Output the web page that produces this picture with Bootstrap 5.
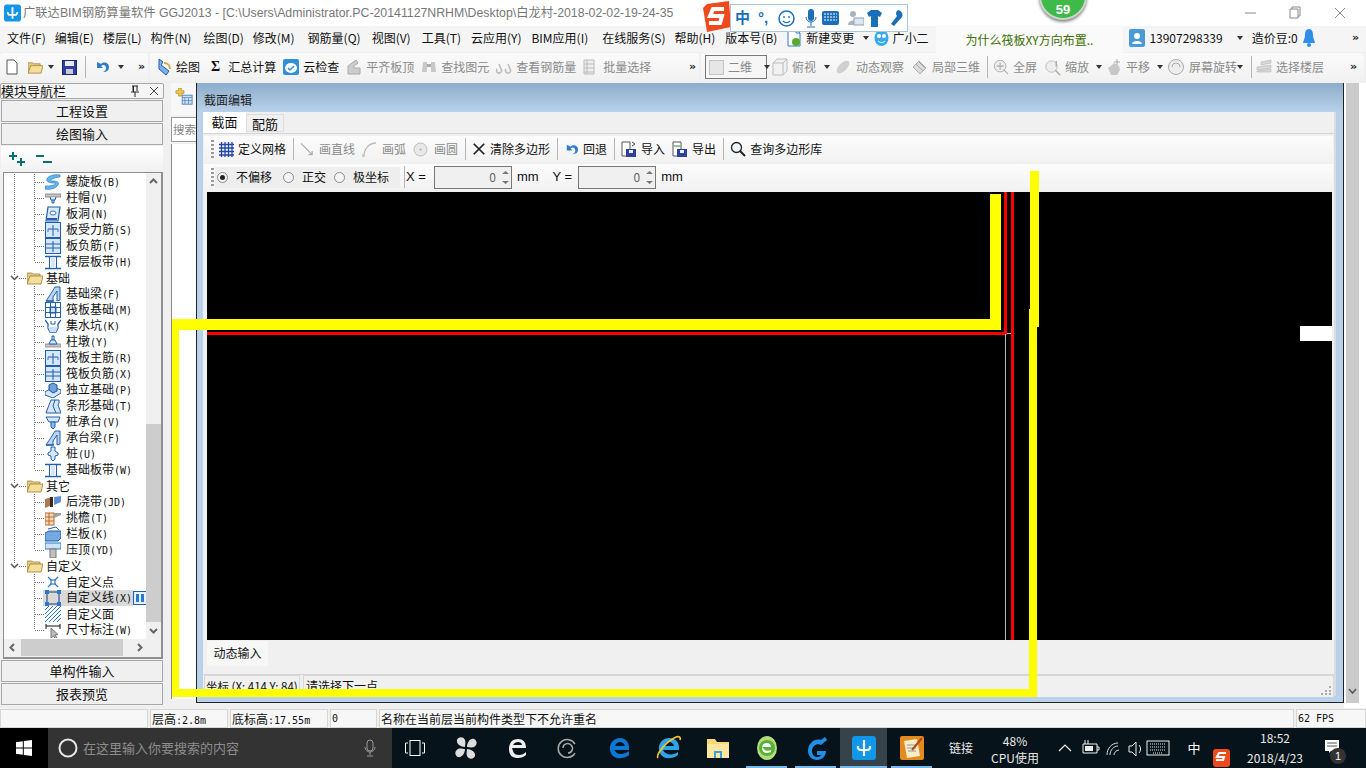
<!DOCTYPE html>
<html lang="zh"><head><meta charset="utf-8"><title>GGJ2013</title>
<link href="https://cdn.jsdelivr.net/npm/bootstrap@5.3.0/dist/css/bootstrap.min.css" rel="stylesheet">
<style>
html,body{width:1366px;height:768px;overflow:hidden;margin:0}
body{position:relative;background:#f0f0f0;color:#111;font:12px/16px "Liberation Sans","Noto Sans CJK SC",sans-serif}
svg{display:block;flex:none}
.ts{font-family:"Noto Sans CJK SC","Liberation Sans",sans-serif}
.m1{margin-left:1px}.m2{margin-left:2px}.m3{margin-left:3px}.m5{margin-left:5px}.mn3{margin-left:-3px}.mn5{margin-left:-5px}.mn7{margin-left:-7px}
.titlebar{height:26px;background:#fff;color:#777;font-size:12.3px;white-space:nowrap;overflow:hidden}
.titlebar .tt{margin-left:2px}
.wctl{position:absolute;top:0;height:26px}
.menubar{height:26px;background:#f5f5f5;white-space:nowrap;padding-left:7px;padding-bottom:2px;gap:9px}
.tipbox{width:187px;height:31px;background:#fafafa;color:#3c6e00;border-radius:3px;margin-left:-1px;padding-left:29px;line-height:29px;align-self:flex-start;margin-top:-1px}
.chev{font-size:11px;font-weight:700;letter-spacing:-1px;color:#222;font-family:"DejaVu Sans",sans-serif;line-height:10px}
.caret-d{width:0;height:0;border:3px solid transparent;border-top:4px solid #333;border-bottom:0;flex:none}
.toolbar{height:31px;background:#f0f0f0;white-space:nowrap;padding-top:1px}
.tgroup{height:28px;background:linear-gradient(#fbfbfb,#f1f1f1);border-radius:3px;margin-right:2px}
.tg1{width:148px;padding-left:5px;flex:none}
.tg2{width:549px;padding-left:6px;flex:none}
.tg3{flex:1;padding-left:4px;position:relative}
.titem{display:flex;align-items:center;gap:4px;margin-right:7px;flex:none}
.off{color:#8b8b8b}
.vsep{width:1px;height:22px;background:#b5b5b5;flex:none}
.combo2{width:62px;height:24px;border:1px solid #777;background:#f6f6f6;color:#888;display:flex;align-items:center;padding-left:3px;gap:4px;flex:none;margin-right:5px}
.main{height:625px}
.leftp{width:165px;flex:none}
.lhead{height:16px;border:1px solid #a8a8a8;border-radius:2px;margin:0 1px 0 0;font-size:13px;line-height:14px;background:#f5f5f5}
.lbtn{height:22px;border:1px solid #a8a8a8;background:#f0f0f0;margin:1px 2px 0 1px;text-align:center;line-height:19px;font-size:13px}
.lbtn.frst{margin-top:1px}
.ltool{height:26px;margin:1px 2px 0 1px;background:linear-gradient(#fff,#f1f1f1);padding-left:7px;gap:10px}
.treebox{margin:0 2px 0 3px;height:487px;border:1px solid #8e8e8e;background:#f0f0f0;border-width:1px 2px 2px 1px}
.treeinner{height:466px}
.trees{width:142px;background:#fff;padding-top:1px;overflow:hidden;flex:none;border-bottom-right-radius:2px}
.vscroll{width:15px;height:466px;background:#f0f0f0;flex:none}
.vthumb{height:198px;background:#cdcdcd;width:15px}
.varrow{height:17px;flex:none}
.hscroll{height:17px;background:#f0f0f0}
.hthumb{width:102px;height:17px;background:#cdcdcd}
.trow{height:16px;display:flex;align-items:center;white-space:nowrap;background-repeat:no-repeat;font-family:"Noto Sans CJK SC",sans-serif;--dv:repeating-linear-gradient(to bottom,#777 0 1px,transparent 1px 2px);--dh:repeating-linear-gradient(to right,#777 0 1px,transparent 1px 2px)}
.trow i{font:10px/16px "DejaVu Sans Mono",monospace}
.lf{padding-left:41px;gap:5px;background-image:var(--dv),var(--dv),var(--dh);background-size:1px 100%,1px 100%,10px 1px;background-position:10px 0,30px 0,31px 8px}
.lf.end{background-size:1px 100%,1px 8px,10px 1px}
.lf.tail{background-image:var(--dv),var(--dh);background-size:1px 100%,10px 1px;background-position:30px 0,31px 8px}
.lf.tail.end{background-size:1px 8px,10px 1px}
.fd{padding-left:23px;gap:3px;background-image:var(--dv),var(--dh);background-size:1px 100%,12px 1px;background-position:10px 0,13px 8px;position:relative}
.fd.last{background-size:1px 8px,12px 1px}
.chv{position:absolute;left:6px;top:5px;background:#fff}
.seln b{font-weight:400;background:#d9d9d9;display:flex;gap:5px;align-items:center;height:16px;margin-left:-2px;padding-left:2px;padding-right:1px}
.midp{width:31px;flex:none;position:relative}
.midtab{height:32px;margin-left:6px;background:#f7f7f7;padding:5px 0 0 4px}
.searchb{height:25px;width:25px;margin:2px 0 0 6px;background:#fff;border:1px solid #9a9a9a;border-right:0;color:#888;font-size:11.5px;line-height:22px;padding-left:1px;overflow:hidden;white-space:nowrap}
.midlist{height:555px;width:25px;margin:2px 0 0 6px;background:#fff;border-left:1px solid #888}
.winp{flex:none;width:1148px;height:620px;border-left:1px solid #222;border-right:1px solid #222;border-bottom:1px solid #222;background:#b9d1ea}
.wtitle{height:29px;background:linear-gradient(#8caccb,#b9d1ea);padding-left:7px;line-height:34px;font-size:12px;color:#222}
.wbody{margin:0 7px 0 6px;background:#f0f0f0;height:584px;border-right:2px solid #dcdcdc}
.wtabs{height:21px;gap:0;background:#f0f0f0;border-bottom:0}
.wtabs .nav-link{border-radius:0;padding:0;color:#111;font-size:13px;height:21px;line-height:20px;text-align:center;background:#fff;border:0;width:43px}
.wtabs .nav-link.idle{width:38px;height:18px;margin-top:2px;background:#f0f0f0;border:1px solid #ddd;line-height:17px}
.wpanel{background:#f0f0f0;border-top:1px solid #d5d5d5;padding-top:2px}
.wbar{height:26px;background:linear-gradient(#fcfcfc,#f2f2f2);padding-left:7px;white-space:nowrap;margin:0 1px 2px 1px}
.grip{width:3px;height:18px;background:repeating-linear-gradient(to bottom,#999 0 2px,transparent 2px 4px);margin-right:5px;flex:none}
.wi{display:flex;align-items:center;gap:4px;margin-right:7px;flex:none}
.wi.g6{gap:6px}
.vs7{margin-right:6px}
.wbar2{height:26px;background:linear-gradient(#fcfcfc,#f2f2f2);padding-left:7px;white-space:nowrap;margin:0 1px 2px 1px}
.wbar2 .grip{margin-right:1px}
.radgrp{background:#eeeeee;height:21px;width:185px;padding-left:2px;flex:none;gap:8px}
.rad{width:11px;height:11px;border-radius:50%;border:1px solid #8a8a8a;background:#f5f5f5;flex:none;position:relative}
.rad.on::after{content:"";position:absolute;left:2px;top:2px;width:5px;height:5px;border-radius:50%;background:#222}
.radgap{width:3px;flex:none;margin-left:-8px}
.latin{font:13px/16px "Liberation Sans",sans-serif;flex:none}
.xl{margin-right:8px;margin-left:1px}
.mml{margin-left:5px}
.yl2{margin-left:14px;margin-right:6px}
.spin{width:78px;height:23px;border:1px solid #777;background:#f0f0f0;color:#666;display:flex;align-items:center;justify-content:flex-end;flex:none;padding-right:2px;gap:6px;font-size:12px}
.canvasbox{height:448px;background:#000;position:relative;overflow:hidden;width:1125px;margin-left:4px}
.cl{position:absolute}
.dynarea{height:30px;background:#f0f0f0;padding-left:4px}
.dyntab{width:61px;height:25px;background:#f7f7f7;line-height:24px;text-align:center;margin-top:1px}
.wstatus{height:23px;margin-top:3px;gap:3px;background:#f0f0f0;white-space:nowrap;overflow:hidden;border-top:1px solid #d5d5d5;position:relative}
.coordb{width:96px;border:1px solid #d8d8d8;border-bottom:0;height:22px;line-height:20px;flex:none;padding-left:1px;overflow:hidden;font-size:11.5px;margin-left:1px}
.msgb{flex:1;border:1px solid #d8d8d8;border-bottom:0;height:22px;line-height:20px;padding-left:2px}
.rgrip{position:absolute;right:3px;bottom:2px}
.rightsb{flex:1;background:#fff;position:relative}
.rtrack{width:13px;height:620px;background:#cbcbcb;margin-left:2px;padding-top:604px}
.status{height:20px;background:#f0f0f0;gap:2px;padding-top:1px;font-family:"DejaVu Sans Mono","Noto Sans CJK SC",monospace;white-space:nowrap}
.scell{height:19px;background:#f7f7f7;border:1px solid #d6d6d6;line-height:18px;padding-left:1px;flex:none;font-size:10px}
.scell span{font:12px "Noto Sans CJK SC",sans-serif}
.sc0{width:148px}.sc1{width:78px}.sc2{width:98px}.sc3{width:47px}.sc4{width:915px}.sc5{flex:1}
.taskbar{height:40px;background:#07131a;color:#e8e8e8;position:relative}
.startb{width:48px;height:40px;background:#000}
.searchbar{width:344px;height:40px;background:#333;color:#8d8d8d;font-size:13px;padding-left:10px;gap:5px;flex:none;position:relative}
.tbi{width:49px;height:40px;flex:none}
.tbi.act{background:#37434a;width:47px}
.tbi.act.tbu::after{left:0;right:0}
.tvw{margin-left:-2px;margin-right:2px}
.tbu{position:relative}
.tbu::after{content:"";position:absolute;left:4px;right:4px;bottom:0;height:2px;background:#76b9ed}
.tray{position:absolute;top:0;height:40px;text-align:center}
.sogou{position:absolute;left:730px;top:4px;width:178px;height:28px;background:#fff;border:1px solid #a9c6de;gap:8px;padding-left:4px;color:#1a6fb8;font-size:15px;font-weight:700}
.slogo{position:absolute;left:703px;top:1px}
.ball{position:absolute;left:1039px;top:-28px;width:48px;height:48px;border-radius:50%;background:#3fb94a;border:2px solid #c9d6cb;box-shadow:0 2px 3px #888;color:#fff;font-weight:700;font-size:13px;text-align:center;padding-top:28px;line-height:16px}
.yl{position:absolute;background:#ff0}
.y1{left:172px;top:319px;width:829px;height:11px}
.y2{left:990px;top:194px;width:11px;height:136px}
.y3{left:1030px;top:171px;width:9px;height:156px}
.y4{left:1029px;top:309px;width:8px;height:388px}
.y5{left:172px;top:689px;width:865px;height:8px}
.y6{left:172px;top:319px;width:7px;height:378px}
</style></head><body>
<svg width="0" height="0" style="position:absolute"><defs>
<symbol id="s" viewBox="0 0 16 16"><path d="M15 1C9 0 3 2 2 5c-1 3 3 4 7 4 2 0 2 1 0 2-3 1-6 1-9 1v3c6 1 11-1 13-4 2-3-2-4-6-4-2 0-2-1 0-2 2-1 5-2 8-2z" fill="#62b8ee" stroke="#2678c4" stroke-width=".7"/></symbol>
<symbol id="capi" viewBox="0 0 16 16"><rect x="0" y="4" width="16" height="3" fill="#c8c8c8" stroke="#777" stroke-width=".8"/><path d="M5 7l1 3h4l1-3M7 10v3h2v-3" fill="#cfe3f7" stroke="#1f5fae"/></symbol>
<symbol id="hole" viewBox="0 0 16 16"><path d="M3 1h12l-2 14H1z" fill="#dbe9f9" stroke="#1f5fae" stroke-width="1.2"/><ellipse cx="8" cy="7" rx="3" ry="2" fill="#fff" stroke="#2b78c8"/><path d="M2 13h10" stroke="#1f5fae" stroke-width="2"/></symbol>
<symbol id="grid1" viewBox="0 0 16 16"><rect x=".5" y=".5" width="15" height="15" fill="#d7e6f8" stroke="#1f5fae"/><path d="M8 3v11M3 7h10" stroke="#1f5fae" stroke-width="1"/><path d="M3 7v3M13 7v3" stroke="#2b78c8"/></symbol>
<symbol id="grid2" viewBox="0 0 16 16"><rect x=".5" y=".5" width="15" height="15" fill="#d7e6f8" stroke="#1f5fae"/><path d="M8 3v11M1 6h14M1 10h14" stroke="#1f5fae" stroke-width="1"/></symbol>
<symbol id="grid3" viewBox="0 0 16 16"><rect x=".5" y=".5" width="15" height="15" fill="#fff" stroke="#1f5fae"/><rect x="5" y="5" width="6" height="6" fill="#cfe1f6" stroke="#1f5fae"/><path d="M1 5.500h14M1 10.500h14M5.500 1v14M10.500 1v14" stroke="#1f5fae"/></symbol>
<symbol id="band" viewBox="0 0 16 16"><path d="M0 2.500h16M0 14.500h16" stroke="#1f5fae" stroke-width="1.600"/><path d="M4.500 3v11M11.500 3v11" stroke="#1f5fae"/><path d="M6 3h4v11H6z" fill="#d7e6f8"/></symbol>
<symbol id="fold" viewBox="0 0 16 16"><path d="M0 3h5l1 1h7v3H3L1 13H0z" fill="#e4c983" stroke="#9a7a35" stroke-width=".7"/><path d="M3 6h13l-2 8H0z" fill="#f5dd9a" stroke="#a07e33" stroke-width=".8"/></symbol>
<symbol id="beam" viewBox="0 0 16 16"><path d="M1 15l6-9 3-5h5v13l-3 1V5L8 11v4z" fill="#bcd6f4" stroke="#1f5fae"/><path d="M1 15h8" stroke="#1f5fae" stroke-width="1.400"/></symbol>
<symbol id="pit" viewBox="0 0 16 16"><path d="M0 2l3 4v4l2 4h6l2-4V6l3-4" fill="none" stroke="#1f5fae" stroke-width="1.300"/><path d="M3 9h10l-2 5H5z" fill="#c9dff6"/><path d="M6 3v3h4V3" fill="none" stroke="#1f5fae"/></symbol>
<symbol id="pier" viewBox="0 0 16 16"><rect y="10" width="16" height="3" fill="#c8c8c8" stroke="#777" stroke-width=".7"/><path d="M4 10l2-4h4l2 4zM7 6V2h2v4" fill="#d7e6f8" stroke="#1f5fae"/></symbol>
<symbol id="ind" viewBox="0 0 16 16"><path d="M0 10l8-5 8 3v3l-8 5-8-3z" fill="#d7e6f8" stroke="#1f5fae"/><path d="M4 8V3l4-2 4 2v6L8 11z" fill="#6ea3dd" stroke="#1f4f96"/></symbol>
<symbol id="strip" viewBox="0 0 16 16"><path d="M1 15l3-8 2-5h8v3l-1 2 3 8z" fill="#d7e6f8" stroke="#1f5fae"/><path d="M10 2l-2 6 3 7" fill="none" stroke="#1f5fae"/></symbol>
<symbol id="cap" viewBox="0 0 16 16"><path d="M1 3h14l-2 5H4z" fill="#d7e6f8" stroke="#1f5fae"/><path d="M6 8h4v5l-2 2-2-2z" fill="#8dbbec" stroke="#1f5fae"/></symbol>
<symbol id="pile" viewBox="0 0 16 16"><path d="M6 1h4v4l3 2v2l-3 1v3l-2 2-2-2v-3L3 9V7l3-2z" fill="#d7e6f8" stroke="#1f5fae"/></symbol>
<symbol id="pour" viewBox="0 0 16 16"><path d="M0 5l7-2v8l-7 3z" fill="#a97a54"/><path d="M9 3l7-1v6l-7 3z" fill="#5d8fd0"/><path d="M5 3h3v10H5z" fill="#3b2a20"/></symbol>
<symbol id="eave" viewBox="0 0 16 16"><rect x="0" y="3" width="9" height="12" fill="#f5d7bf" stroke="#bb6a2a"/><path d="M0 7h9M0 11h9M4 3v12" stroke="#bb6a2a"/><path d="M9 3h7v2l-7 3z" fill="#a0a0a0"/></symbol>
<symbol id="rail" viewBox="0 0 16 16"><path d="M0 7l4-2h12v7l-3 3H0z" fill="#74a9e4" stroke="#1f5fae"/><path d="M3 3l8-2 3 3" fill="none" stroke="#1f5fae"/></symbol>
<symbol id="top" viewBox="0 0 16 16"><rect y="1" width="16" height="6" fill="#cfe3f7" stroke="#2b78c8"/><rect x="5" y="7" width="6" height="9" fill="#c0c0c0" stroke="#777"/></symbol>
<symbol id="pt" viewBox="0 0 16 16"><path d="M3 3l10 10M13 3L3 13" stroke="#2b78c8" stroke-width="1.200"/><rect x="6" y="6" width="4" height="4" fill="#fff" stroke="#1f5fae"/></symbol>
<symbol id="ln" viewBox="0 0 16 16"><rect x="2" y="2" width="12" height="12" fill="none" stroke="#1a3c78"/><path d="M0 0h4v4H0zM12 0h4v4h-4zM0 12h4v4H0zM12 12h4v4h-4z" fill="#2b78c8"/></symbol>
<symbol id="hatch" viewBox="0 0 16 16"><path d="M0 4l4-4M0 8l8-8M0 12L12 0M0 16L16 0M4 16L16 4M8 16l8-8M12 16l4-4" stroke="#2b78c8"/></symbol>
<symbol id="dim" viewBox="0 0 16 16"><path d="M1 2v5M15 2v5M1 4h14" stroke="#111"/><path d="M6 6l0 10 2.500-2 2 3 1.500-1-2-3 3-.5z" fill="#bbb" stroke="#777"/></symbol>
<symbol id="cross" viewBox="0 0 16 16"><path d="M2 2l12 12M14 2L2 14" stroke="#222" stroke-width="2"/></symbol>
</defs></svg>

<div class="titlebar d-flex align-items-center ps-1">
<svg width="17" height="18" viewBox="0 0 18 18"><rect width="18" height="18" rx="3" fill="#1296e8"/><path d="M9 3v12M4 8a2.500 2.500 0 0 0 2.500 3H11.500A2.500 2.500 0 0 0 14 8" stroke="#fff" stroke-width="2" fill="none"/></svg>
<span class="tt">广联达BIM钢筋算量软件 GGJ2013 - [C:\Users\Administrator.PC-20141127NRHM\Desktop\白龙村-2018-02-02-19-24-35</span>
</div>
<svg class="wctl" style="left:1235px" width="131" height="26" viewBox="0 0 131 26"><path d="M10 13h11" stroke="#888"/><path d="M55 9h8v9h-8zM57 9V7h8v9h-2" fill="none" stroke="#888"/><path d="M100 8l10 10M110 8l-10 10" stroke="#888"/></svg>

<div class="menubar d-flex align-items-center ts">
<span>文件(F)</span><span>编辑(E)</span><span>楼层(L)</span><span>构件(N)</span><span class="m3">绘图(D)</span><span>修改(M)</span><span class="ms-1">钢筋量(Q)</span><span class="m2">视图(V)</span><span class="m2">工具(T)</span><span class="m1">云应用(Y)</span><span class="m1">BIM应用(I)</span><span class="m5">在线服务(S)</span><span>帮助(H)</span><span class="m1">版本号(B)</span>
<svg width="16" height="20" viewBox="0 0 16 20"><path d="M2 1h8l4 4v13H2z" fill="#fff" stroke="#2f7dc9"/><path d="M10 1v4h4" fill="none" stroke="#2f7dc9"/><circle cx="10" cy="14" r="4" fill="#58a92c"/></svg>
<span class="mn5">新建变更</span><span class="caret-d"></span>
<svg class="mn5" width="17" height="18" viewBox="0 0 17 18"><ellipse cx="8.500" cy="9" rx="7" ry="8" fill="#38a9ea"/><circle cx="6" cy="7" r="2" fill="#fff"/><circle cx="11" cy="7" r="2" fill="#fff"/><path d="M5 12c2 2 5 2 7 0" stroke="#fff" fill="none"/></svg>
<span class="mn7">广小二</span>
<div class="tipbox ts">为什么筏板XY方向布置..</div>
<svg width="16" height="18" viewBox="0 0 16 18" class="mn3"><rect width="16" height="18" rx="2" fill="#4a9ad8"/><circle cx="8" cy="7" r="3" fill="#fff"/><path d="M3 15c0-4 10-4 10 0z" fill="#fff"/></svg>
<span class="mn5">13907298339</span><span class="caret-d m5"></span><span>造价豆:0</span>
<svg width="14" height="20" viewBox="0 0 14 20" class="mn5"><path d="M7 1c3 0 4 3 4 6 0 4 2 6 2 8H1c0-2 2-4 2-8 0-3 1-6 4-6z" fill="#2f8fe8"/><circle cx="7" cy="17" r="2" fill="#2f8fe8"/></svg>
<span class="chev ms-auto me-2">»</span>
</div>

<div class="toolbar d-flex align-items-start ts">
<div class="tgroup tg1 d-flex align-items-center">
<svg width="14" height="16" viewBox="0 0 14 16" class="me-2"><path d="M2 1h7l3 3v11H2z" fill="#fff" stroke="#555"/></svg>
<svg width="17" height="15" viewBox="0 0 16 16"><use href="#fold"/></svg><span class="caret-d ms-1"></span>
<svg width="15" height="15" viewBox="0 0 15 15" class="ms-2"><rect x=".5" y=".5" width="14" height="14" fill="#2e3f9e" stroke="#1a2570"/><rect x="3" y="1" width="9" height="5" fill="#e8e8f4"/><rect x="4" y="9" width="7" height="5" fill="#c8ccd8"/></svg>
<span class="vsep ms-2 me-2"></span>
<svg width="16" height="16" viewBox="0 0 16 16"><path d="M3 3v6h6L7 7c2-2 5-1 5 2 0 2-1 3-3 4 4 0 6-2 6-5 0-4-5-6-8-3z" fill="#2f7dc9"/></svg><span class="caret-d ms-2"></span>
<span class="chev ms-auto me-1">»</span>
</div>
<div class="tgroup tg2 d-flex align-items-center">
<div class="titem"><svg width="16" height="18" viewBox="0 0 16 18"><path d="M3 1l4 3-2 3 8 6-3 4-7-6z" fill="#7fb0e8" stroke="#1f5fae"/><path d="M8 5c4 0 6 3 6 6" stroke="#d2a93a" stroke-width="2" fill="none"/></svg><span>绘图</span></div>
<div class="titem ms-1"><b class="me-1" style="font-family:'Liberation Serif',serif;font-size:14px">Σ</b><span>汇总计算</span></div>
<div class="titem"><svg width="16" height="16" viewBox="0 0 16 16"><rect width="16" height="16" rx="2" fill="#2f8fd8"/><ellipse cx="8" cy="9" rx="6" ry="5" fill="#fff"/><path d="M5 9l2 2 4-4" stroke="#2f8fd8" fill="none" stroke-width="1.500"/></svg><span>云检查</span></div>
<div class="titem off"><svg width="16" height="16" viewBox="0 0 16 16"><path d="M2 15V7l8-6 2 3-4 3v2h6v6z" fill="#ccc" stroke="#aaa"/></svg><span>平齐板顶</span></div>
<div class="titem off"><svg width="16" height="16" viewBox="0 0 16 16"><path d="M2 3h4v10H1zM10 3h4l1 10h-5z" fill="#c8c8c8"/><rect x="6" y="5" width="4" height="3" fill="#aaa"/></svg><span>查找图元</span></div>
<div class="titem off"><svg width="16" height="16" viewBox="0 0 16 16"><path d="M1 10a2.500 2.500 0 1 0 4 0L3 5M10 10a2.500 2.500 0 1 0 4 0l-2-5" fill="none" stroke="#bbb" stroke-width="1.500"/></svg><span>查看钢筋量</span></div>
<div class="titem off"><svg width="16" height="16" viewBox="0 0 16 16"><path d="M1 1h10v14H1z" fill="#eee" stroke="#bbb"/><path d="M1 5h10M1 9h10M1 13h10M4 1v14" stroke="#bbb"/></svg><span>批量选择</span></div>
<span class="chev ms-auto me-1">»</span>
</div>
<div class="tgroup tg3 d-flex align-items-center">
<div class="combo2"><svg width="15" height="15" viewBox="0 0 15 15"><rect x=".5" y=".5" width="14" height="14" fill="#e6e6e6" stroke="#c4c4c4"/></svg><span>二维</span><span class="caret-d ms-2"></span></div>
<svg width="16" height="18" viewBox="0 0 16 18"><path d="M1 5l4-4h10v12l-4 4H1zM1 5h10v12M11 5l4-4" fill="#f2f2f2" stroke="#bbb"/></svg>
<span class="off ms-1 me-2">俯视</span><span class="caret-d me-1"></span>
<div class="titem off"><svg width="18" height="18" viewBox="0 0 18 18"><ellipse cx="9" cy="9" rx="8" ry="4" transform="rotate(-45 9 9)" fill="#cfcfcf"/></svg><span>动态观察</span></div>
<div class="titem off"><svg width="17" height="17" viewBox="0 0 17 17"><path d="M2 8l6-6 7 7-6 6z" fill="#dcdcdc" stroke="#aaa"/><path d="M5 5l7 7M8 3l6 6" stroke="#aaa"/></svg><span>局部三维</span></div>
<span class="vsep"></span>
<div class="titem off m5"><svg width="16" height="16" viewBox="0 0 18 18"><circle cx="8" cy="8" r="6.500" fill="#eee" stroke="#aaa"/><path d="M8 4v8M4 8h8M12 12l5 5" stroke="#aaa" stroke-width="1.200"/></svg><span>全屏</span></div>
<div class="titem off"><svg width="17" height="17" viewBox="0 0 18 18"><circle cx="8" cy="8" r="6" fill="#eee" stroke="#bbb"/><path d="M12 12l5 5M13 2v6" stroke="#aaa" stroke-width="1.500"/></svg><span>缩放</span></div>
<span class="caret-d me-1"></span>
<div class="titem off"><svg width="16" height="18" viewBox="0 0 16 18"><path d="M2 10l4-3 2-2 5 3 1 4-3 5H5z" fill="#c8c8c8"/><path d="M11 1v6M8 4h6" stroke="#aaa"/></svg><span>平移</span></div>
<span class="caret-d me-1"></span>
<div class="titem off me-0"><svg width="18" height="18" viewBox="0 0 18 18"><circle cx="9" cy="9" r="7.500" fill="#eee" stroke="#aaa"/><path d="M5 9a4 4 0 0 1 8 0" stroke="#aaa" fill="none"/></svg><span>屏幕旋转</span></div>
<span class="caret-d"></span><span class="vsep ms-2 me-1"></span>
<div class="titem off"><svg width="16" height="16" viewBox="0 0 16 16"><path d="M5 3l10-2v3L5 6zM1 8l14-2v3L1 11zM1 12l14-2v3H1z" fill="#d8d8d8" stroke="#bbb" stroke-width=".7"/></svg><span>选择楼层</span></div>
<span class="chev ms-auto me-2">»</span>
</div>
</div>

<div class="main d-flex">
<div class="leftp ts">
<div class="lhead d-flex align-items-center"><span>模块导航栏</span>
<svg width="12" height="12" viewBox="0 0 12 12" class="ms-auto me-2"><path d="M3 1h6M4 1v5M8 1v5M2 7h8M6 7v5" stroke="#222"/><path d="M4 1h1v6H4z" fill="#222"/></svg>
<svg width="10" height="10" viewBox="0 0 10 10" class="me-1"><path d="M1 1l8 8M9 1l-8 8" stroke="#444"/></svg></div>
<div class="lbtn frst">工程设置</div>
<div class="lbtn">绘图输入</div>
<div class="ltool d-flex align-items-center">
<svg width="18" height="16" viewBox="0 0 18 16"><path d="M1 5h8M5 1v8M9 11h8M13 7v8" stroke="#08706e" stroke-width="2"/></svg>
<svg width="16" height="14" viewBox="0 0 16 14"><path d="M0 4h8M7 10h9" stroke="#08706e" stroke-width="2"/></svg>
</div>
<div class="treebox">
<div class="treeinner d-flex">
<div class="trees">
<div class="trow lf"><svg width="16" height="16"><use href="#s"/></svg><span>螺旋板<i>(B)</i></span></div>
<div class="trow lf"><svg width="16" height="16"><use href="#capi"/></svg><span>柱帽<i>(V)</i></span></div>
<div class="trow lf"><svg width="16" height="16"><use href="#hole"/></svg><span>板洞<i>(N)</i></span></div>
<div class="trow lf"><svg width="16" height="16"><use href="#grid1"/></svg><span>板受力筋<i>(S)</i></span></div>
<div class="trow lf"><svg width="16" height="16"><use href="#grid2"/></svg><span>板负筋<i>(F)</i></span></div>
<div class="trow lf end"><svg width="16" height="16"><use href="#band"/></svg><span>楼层板带<i>(H)</i></span></div>
<div class="trow fd"><svg class="chv" width="9" height="6" viewBox="0 0 9 6"><path d="M1 1l3.500 3.500L8 1" fill="none" stroke="#555" stroke-width="1.500"/></svg><svg width="16" height="16"><use href="#fold"/></svg><span>基础</span></div>
<div class="trow lf"><svg width="16" height="16"><use href="#beam"/></svg><span>基础梁<i>(F)</i></span></div>
<div class="trow lf"><svg width="16" height="16"><use href="#grid3"/></svg><span>筏板基础<i>(M)</i></span></div>
<div class="trow lf"><svg width="16" height="16"><use href="#pit"/></svg><span>集水坑<i>(K)</i></span></div>
<div class="trow lf"><svg width="16" height="16"><use href="#pier"/></svg><span>柱墩<i>(Y)</i></span></div>
<div class="trow lf"><svg width="16" height="16"><use href="#grid1"/></svg><span>筏板主筋<i>(R)</i></span></div>
<div class="trow lf"><svg width="16" height="16"><use href="#grid2"/></svg><span>筏板负筋<i>(X)</i></span></div>
<div class="trow lf"><svg width="16" height="16"><use href="#ind"/></svg><span>独立基础<i>(P)</i></span></div>
<div class="trow lf"><svg width="16" height="16"><use href="#strip"/></svg><span>条形基础<i>(T)</i></span></div>
<div class="trow lf"><svg width="16" height="16"><use href="#cap"/></svg><span>桩承台<i>(V)</i></span></div>
<div class="trow lf"><svg width="16" height="16"><use href="#beam"/></svg><span>承台梁<i>(F)</i></span></div>
<div class="trow lf"><svg width="16" height="16"><use href="#pile"/></svg><span>桩<i>(U)</i></span></div>
<div class="trow lf end"><svg width="16" height="16"><use href="#band"/></svg><span>基础板带<i>(W)</i></span></div>
<div class="trow fd"><svg class="chv" width="9" height="6" viewBox="0 0 9 6"><path d="M1 1l3.500 3.500L8 1" fill="none" stroke="#555" stroke-width="1.500"/></svg><svg width="16" height="16"><use href="#fold"/></svg><span>其它</span></div>
<div class="trow lf"><svg width="16" height="16"><use href="#pour"/></svg><span>后浇带<i>(JD)</i></span></div>
<div class="trow lf"><svg width="16" height="16"><use href="#eave"/></svg><span>挑檐<i>(T)</i></span></div>
<div class="trow lf"><svg width="16" height="16"><use href="#rail"/></svg><span>栏板<i>(K)</i></span></div>
<div class="trow lf end"><svg width="16" height="16"><use href="#top"/></svg><span>压顶<i>(YD)</i></span></div>
<div class="trow fd last"><svg class="chv" width="9" height="6" viewBox="0 0 9 6"><path d="M1 1l3.500 3.500L8 1" fill="none" stroke="#555" stroke-width="1.500"/></svg><svg width="16" height="16"><use href="#fold"/></svg><span>自定义</span></div>
<div class="trow lf tail"><svg width="16" height="16"><use href="#pt"/></svg><span>自定义点</span></div>
<div class="trow lf tail seln"><b><svg width="16" height="16"><use href="#ln"/></svg><span>自定义线<i>(X)</i></span></b><svg width="14" height="14" viewBox="0 0 14 14" class="mn5"><rect x=".5" y=".5" width="13" height="13" fill="#e4f0fb" stroke="#1f5fae"/><path d="M3 3h3v8H3zM8 3h3v8H8z" fill="#2b78c8"/></svg></div>
<div class="trow lf tail"><svg width="16" height="16"><use href="#hatch"/></svg><span>自定义面</span></div>
<div class="trow lf tail end"><svg width="16" height="16"><use href="#dim"/></svg><span>尺寸标注<i>(W)</i></span></div>
</div>
<div class="vscroll d-flex flex-column">
<svg class="varrow" width="15" height="17" viewBox="0 0 15 17"><path d="M4 10l3.500-3.500L11 10" stroke="#666" stroke-width="2" fill="none"/></svg>
<div class="flex-grow-1"></div>
<div class="vthumb"></div>
<svg class="varrow" width="15" height="17" viewBox="0 0 15 17"><path d="M4 7l3.500 3.500L11 7" stroke="#666" stroke-width="2" fill="none"/></svg>
</div>
</div>
<div class="hscroll d-flex align-items-center">
<svg width="17" height="17" viewBox="0 0 17 17"><path d="M10 5l-3.500 3.500L10 12" stroke="#666" stroke-width="2" fill="none"/></svg>
<div class="hthumb"></div>
<svg class="ms-2" width="17" height="17" viewBox="0 0 17 17"><path d="M7 5l3.500 3.500L7 12" stroke="#666" stroke-width="2" fill="none"/></svg>
</div>
</div>
<div class="lbtn frst">单构件输入</div>
<div class="lbtn">报表预览</div>
</div>

<div class="midp ts">
<div class="midtab"><svg width="18" height="18" viewBox="0 0 20 20"><path d="M1 3h3V0h3v3h3v3H7v3H4V6H1z" fill="#f2c94c" stroke="#a88416" stroke-width=".7"/><rect x="8" y="8" width="11" height="10" fill="#d3e3f5" stroke="#4a7eb8"/><path d="M8 10.500h11M11 11v7M15 11v7M8 14h11" stroke="#4a7eb8" stroke-width=".8"/></svg></div>
<div class="searchb">搜索</div>
<div class="midlist"></div>
</div>

<div class="winp ts">
<div class="wtitle">截面编辑</div>
<div class="wbody">
<ul class="nav wtabs">
<li class="nav-item"><a class="nav-link">截面</a></li>
<li class="nav-item"><a class="nav-link idle">配筋</a></li>
</ul>
<div class="wpanel">
<div class="wbar d-flex align-items-center">
<span class="grip"></span>
<div class="wi"><svg width="15" height="15" viewBox="0 0 15 15"><path d="M0 2.500h15M0 6h15M0 9.500h15M0 13h15M2.500 0v15M6 0v15M9.500 0v15M13 0v15" stroke="#2047a8" stroke-width="1.300"/></svg><span>定义网格</span></div>
<span class="vsep vs7"></span>
<div class="wi off"><svg width="15" height="14" viewBox="0 0 16 14"><path d="M1 1l12 12M13 9v4H9" stroke="#aaa" fill="none" stroke-width="1.200"/></svg><span>画直线</span></div>
<div class="wi off"><svg width="16" height="16" viewBox="0 0 16 16"><path d="M2 15C2 8 7 2 14 2" stroke="#bbb" fill="none" stroke-width="1.300"/><rect x="0" y="13" width="3" height="3" fill="#ccc"/></svg><span>画弧</span></div>
<div class="wi g6 off"><svg width="15" height="15" viewBox="0 0 15 15"><circle cx="7.500" cy="7.500" r="6.500" fill="#e8e8e8" stroke="#c0c0c0"/><circle cx="7.500" cy="7.500" r="1" fill="#aaa"/></svg><span>画圆</span></div>
<span class="vsep vs7"></span>
<div class="wi"><svg width="14" height="14"><use href="#cross"/></svg><span>清除多边形</span></div>
<span class="vsep vs7"></span>
<div class="wi"><svg width="15" height="15" viewBox="0 0 16 16"><path d="M3 3v6h6L7 7c2-2 5-1 5 2 0 2-1 3-3 4 4 0 6-2 6-5 0-4-5-6-8-3z" fill="#2f7dc9"/></svg><span>回退</span></div>
<span class="vsep vs7"></span>
<div class="wi"><svg width="16" height="16" viewBox="0 0 16 16"><path d="M1 1h8v14H1z" fill="#fff" stroke="#555"/><rect x="5" y="8" width="10" height="8" fill="#2e3f9e"/><rect x="8" y="9" width="4" height="3" fill="#eee"/><path d="M11 1l3 2-3 2" stroke="#444" fill="none"/></svg><span>导入</span></div>
<div class="wi"><svg width="16" height="16" viewBox="0 0 16 16"><path d="M1 1h8v14H1z" fill="#fff" stroke="#555"/><rect x="5" y="8" width="10" height="8" fill="#2e3f9e"/><rect x="8" y="9" width="4" height="3" fill="#eee"/><path d="M2 5h6" stroke="#2b8a3e"/></svg><span>导出</span></div>
<span class="vsep vs7"></span>
<div class="wi"><svg width="16" height="16" viewBox="0 0 16 16"><circle cx="6.500" cy="6.500" r="5" fill="#eef6fb" stroke="#222" stroke-width="1.300"/><path d="M10 10l5 5" stroke="#222" stroke-width="2"/></svg><span>查询多边形库</span></div>
</div>
<div class="wbar2 d-flex align-items-center">
<span class="grip"></span>
<div class="radgrp d-flex align-items-center"><span class="rad on"></span><span>不偏移</span><span class="radgap"></span><span class="rad"></span><span>正交</span><span class="rad"></span><span>极坐标</span></div>
<span class="vsep ms-1"></span>
<span class="latin xl">X =</span>
<div class="spin">0<svg width="7" height="15" viewBox="0 0 7 15"><path d="M0 4l3.500-3L7 4zM0 11l3.500 3L7 11z" fill="#777"/></svg></div>
<span class="latin mml">mm</span><span class="latin yl2">Y =</span>
<div class="spin">0<svg width="7" height="15" viewBox="0 0 7 15"><path d="M0 4l3.500-3L7 4zM0 11l3.500 3L7 11z" fill="#777"/></svg></div>
<span class="latin mml">mm</span>
</div>
<div class="canvasbox">
<span class="cl" style="left:0;top:140px;width:800px;height:3px;background:#f00"></span>
<span class="cl" style="left:797px;top:0;width:3px;height:143px;background:#f00"></span>
<span class="cl" style="left:804px;top:0;width:3px;height:448px;background:#f00"></span>
<span class="cl" style="left:798px;top:142px;width:1px;height:306px;background:#bbb"></span>
<span class="cl" style="left:800px;top:141px;width:4px;height:1px;background:#bbb"></span>
<span class="cl" style="left:1093px;top:134px;width:32px;height:15px;background:#fff"></span>
</div>
<div class="dynarea"><div class="dyntab">动态输入</div></div>
<div class="wstatus d-flex">
<div class="coordb">坐标 (X: 414 Y: 84)</div>
<div class="msgb">请选择下一点</div>
<svg class="rgrip" width="10" height="10" viewBox="0 0 10 10"><path d="M8 1h2v2H8zM4 5h2v2H4zM8 5h2v2H8zM0 8h2v2H0zM4 8h2v2H4zM8 8h2v2H8z" fill="#aaa"/></svg>
</div>
</div>
</div>
</div>
<div class="rightsb"><div class="rtrack"><svg width="13" height="10" viewBox="0 0 13 10"><path d="M3 2l3.500 4L10 2" stroke="#555" stroke-width="1.500" fill="none"/></svg></div></div>
</div>

<div class="status d-flex">
<div class="scell sc0"></div>
<div class="scell sc1"><span>层高</span>:2.8m</div>
<div class="scell sc2"><span>底标高</span>:17.55m</div>
<div class="scell sc3">0</div>
<div class="scell sc4"><span>名称在当前层当前构件类型下不允许重名</span></div>
<div class="scell sc5">62 FPS</div>
</div>

<div class="taskbar d-flex ts">
<div class="startb d-flex align-items-center justify-content-center"><svg width="16" height="16" viewBox="0 0 16 16"><path d="M0 2.200l6.800-1v6.300H0zM7.800 1L16 0v7.500H7.800zM0 8.500h6.800v6.300l-6.800-1zM7.800 8.500H16V16l-8.200-1.100z" fill="#fff"/></svg></div>
<div class="searchbar d-flex align-items-center"><svg width="20" height="20" viewBox="0 0 20 20"><circle cx="10" cy="10" r="8.500" fill="none" stroke="#e6e6e6" stroke-width="2"/></svg><span>在这里输入你要搜索的内容</span>
<svg class="ms-auto me-3" width="12" height="18" viewBox="0 0 12 18"><rect x="3" y="1" width="6" height="11" rx="3" fill="none" stroke="#999"/><path d="M1 8a5 5 0 0 0 10 0M6 13v3M3 17h6" stroke="#999" fill="none"/></svg></div>
<div class="tbi tvw d-flex align-items-center justify-content-center"><svg width="20" height="16" viewBox="0 0 20 16"><rect x="5" y=".5" width="10" height="15" fill="none" stroke="#fff"/><path d="M3 3H.5v10H3M17 3h2.500v10H17" fill="none" stroke="#fff"/></svg></div>
<div class="tbi d-flex align-items-center justify-content-center"><svg width="24" height="24" viewBox="0 0 24 24"><path d="M11 11C7 11 2 8 3 4c1-3 6-4 8 0 1 2 0 5 0 7zM13 11c0-4 3-9 7-8 3 1 4 6 0 8-2 1-5 0-7 0zM13 13c4 0 9 3 8 7-1 3-6 4-8 0-1-2 0-5 0-7zM11 13c0 4-3 9-7 8-3-1-4-6 0-8 2-1 5 0 7 0z" fill="#ddd"/></svg></div>
<div class="tbi m3 d-flex align-items-center justify-content-center"><svg width="24" height="26" viewBox="0 0 24 26"><path d="M6 13h14c0-6-3-9-8-9-6 0-9 4-9 10 0 7 4 9 9 9 3 0 6-1 8-3v-3c-2 2-4 3-7 3-3 0-5-1-6-4zM7 10c1-2 3-3 5-3s4 1 4 3z" fill="#eee"/></svg></div>
<div class="tbi d-flex align-items-center justify-content-center"><svg width="22" height="22" viewBox="0 0 22 22"><path d="M19 7A9 9 0 1 0 19 16M7 11c0-4 5-6 8-3s1 8-3 8" stroke="#aaa" stroke-width="1.500" fill="none"/></svg></div>
<div class="tbi ms-1 d-flex align-items-center justify-content-center"><svg width="24" height="24" viewBox="0 0 24 24"><path d="M6 14h15c1-7-3-12-9-12C6 2 1 7 2 14c1 6 6 9 11 8 3 0 6-1 8-3v-4c-5 4-12 4-14 0zM7 10c1-3 3-4 5-4s4 1 5 4z" fill="#0b78d7"/></svg></div>
<div class="tbi d-flex align-items-center justify-content-center"><svg width="26" height="26" viewBox="0 0 26 26"><path d="M7 15h16c1-8-4-12-10-12C7 3 2 8 3 15c1 6 6 9 11 8 3 0 6-1 8-3v-3c-5 4-13 3-15-2zM8 11c1-3 3-4 5-4s4 1 5 4z" fill="#2ea4e8"/><path d="M2 23C0 20 8 8 20 2c3-1 5 0 4 3" stroke="#f2c230" stroke-width="1.700" fill="none"/></svg></div>
<div class="tbi d-flex align-items-center justify-content-center"><svg width="24" height="22" viewBox="0 0 24 22"><path d="M1 2h8l2 3h12v16H1z" fill="#f8d776"/><rect x="1" y="7" width="22" height="14" fill="#fce7a0"/><path d="M8 21v-7h8v7h-2v-5h-4v5z" fill="#3aa0e0"/></svg></div>
<div class="tbi tbu d-flex align-items-center justify-content-center"><svg width="24" height="28" viewBox="0 0 24 28"><ellipse cx="12" cy="14" rx="10" ry="12" fill="#b4dc7c"/><circle cx="12" cy="14" r="8" fill="#55b236"/><path d="M7 13h9c0-3-2-4-4-4-4 0-5 3-5 5 0 3 2 5 5 5 2 0 3-1 4-1v-2c-3 1-6 1-7-1z" fill="#fff"/></svg></div>
<div class="tbi tbu d-flex align-items-center justify-content-center"><svg width="24" height="28" viewBox="0 0 24 28"><path d="M21 3l-4 3c-6-2-13 3-13 11 0 5 4 9 9 9 5 0 9-4 9-9h-9v4h4c-1 2-3 2-4 2-3 0-5-3-5-6 0-5 5-8 9-6l6-5z" fill="#1e8fe8"/></svg></div>
<div class="tbi tbu act d-flex align-items-center justify-content-center"><svg width="24" height="24" viewBox="0 0 24 24"><rect width="24" height="24" rx="3" fill="#1296e8"/><path d="M12 4v16M6 10a3 3 0 0 0 3 4h6a3 3 0 0 0 3-4" stroke="#fff" stroke-width="2.200" fill="none"/></svg></div>
<div class="tbi tbu d-flex align-items-center justify-content-center"><svg width="24" height="24" viewBox="0 0 24 24"><rect width="24" height="24" rx="2" fill="#e68a1e"/><path d="M4 5l13-2 3 17-13 2z" fill="#f6edc9"/><path d="M7 9h9M7 12h9M8 15h8" stroke="#999"/><path d="M22 2L12 14" stroke="#b34a12" stroke-width="2"/></svg></div>
<div class="tray" style="left:936px;width:50px;line-height:40px">链接</div>
<div class="tray" style="left:985px;width:60px;line-height:17px;padding-top:4px">48%<br>CPU使用</div>
<svg class="tray" style="left:1056px" width="150" height="40" viewBox="0 0 150 40"><path d="M3 23l6-6 6 6" stroke="#eee" stroke-width="1.200" fill="none"/><path d="M27 16h14v9H27zM41 19h2v3h-2" fill="none" stroke="#eee"/><path d="M29 18h8v5h-8z" fill="#eee"/><path d="M29 12v4M32 12v4" stroke="#eee"/><path d="M51 27c0-7 5-12 11-12M54 27c0-5 4-9 8-9M58 27c0-2 2-5 5-5" stroke="#ddd" fill="none"/><path d="M73 18h3l4-4v14l-4-4h-3zM83 17c2 2 2 6 0 8" stroke="#eee" fill="none"/><rect x="91" y="13" width="22" height="14" fill="none" stroke="#eee"/><path d="M94 16h16M94 19h16M94 22h16M97 25h10" stroke="#eee" stroke-dasharray="1 1"/></svg>
<div class="tray" style="left:1186px;width:16px;line-height:40px;font-size:13px;color:#fff">中</div>
<svg class="tray" style="left:1213px;top:10px" width="17" height="20" viewBox="0 0 17 20"><rect y="1" width="17" height="18" rx="3" fill="#ee4a1d"/><path d="M13 5H6L4 9h7l-1 3H3" stroke="#fff" stroke-width="2.200" fill="none"/></svg>
<div class="tray" style="left:1243px;width:64px;line-height:20px">18:52<br>2018/4/23</div>
<svg class="tray" style="left:1322px" width="24" height="40" viewBox="0 0 24 40"><path d="M3 12h14v11H9l-2 2v-2H3z" fill="#fff"/><path d="M5 15h10M5 18h10" stroke="#555"/><circle cx="16" cy="28" r="8" fill="#333"/><text x="13" y="32" font-size="11" fill="#fff" font-family="Liberation Sans">1</text></svg>
</div>

<svg class="slogo" width="28" height="31" viewBox="0 0 28 31"><path d="M4 3l22-3 2 26-24 5-4-24z" fill="#ee4a1d"/><path d="M21 8H10L7 15h12l-2 7H6" stroke="#fff" stroke-width="4" fill="none"/></svg>
<div class="sogou d-flex align-items-center">
<span>中</span><span>°,</span>
<svg class="m2" width="17" height="19" viewBox="0 0 17 19"><circle cx="8.500" cy="9.500" r="7.500" fill="none" stroke="#1a6fb8" stroke-width="1.500"/><path d="M6 7v2M11 7v2M5 12c2 2 5 2 7 0" stroke="#1a6fb8" fill="none" stroke-width="1.300"/></svg>
<svg class="m2" width="12" height="19" viewBox="0 0 12 19"><rect x="3" y="0" width="6" height="12" rx="3" fill="#1a6fb8"/><path d="M1 8a5 5 0 0 0 10 0M6 13v4M2 18h8" stroke="#1a6fb8" fill="none"/></svg>
<svg class="mn3" width="17" height="14" viewBox="0 0 17 14"><rect width="17" height="14" rx="2" fill="#1a6fb8"/><path d="M2 3h13M2 6h13M2 9h13" stroke="#fff" stroke-dasharray="2 1"/></svg>
<svg width="17" height="19" viewBox="0 0 17 19"><circle cx="6" cy="5" r="3" fill="#a9b4bf"/><path d="M1 16c0-6 10-6 10 0z" fill="#a9b4bf"/><rect x="7" y="9" width="10" height="7" fill="#dfe7ee" stroke="#8ba0b4"/></svg>
<svg class="mn5" width="15" height="17" viewBox="0 0 15 17"><path d="M4 0h7l4 3-2 4-2-1v11H4V6L2 7 0 3z" fill="#1a6fb8"/></svg>
<svg width="13" height="17" viewBox="0 0 13 17"><path d="M8 0a5 5 0 0 1 4 7L4 16 1 14l6-8a4 4 0 0 1 1-6z" fill="#1a6fb8"/></svg>
</div>
<div class="ball">59</div>
<span class="yl y1"></span><span class="yl y2"></span><span class="yl y3"></span><span class="yl y4"></span><span class="yl y5"></span><span class="yl y6"></span>
<script src="https://cdn.jsdelivr.net/npm/bootstrap@5.3.0/dist/js/bootstrap.bundle.min.js"></script>
</body></html>
